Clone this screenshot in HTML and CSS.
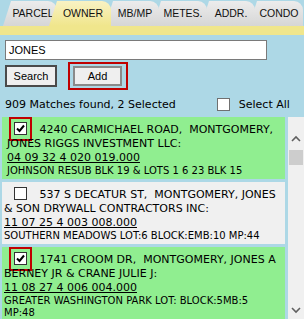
FILE: index.html
```html
<!DOCTYPE html>
<html lang="en">
  <head>
    <meta charset="UTF-8" />
    <title>Owner Search</title>
    <link rel="stylesheet" href="styles.css">
  </head>
  <body>
    <div class="tabs">
      <div class="tab">PARCEL</div>
      <div class="tab active">OWNER</div>
      <div class="tab">MB/MP</div>
      <div class="tab">METES.</div>
      <div class="tab">ADDR.</div>
      <div class="tab">CONDO</div>
    </div>
    <div class="tab-strip"></div>

    <div class="search-panel">
      <div class="search-input">JONES</div>
      <div class="search-buttons">
        <button class="btn btn-search">Search</button>
        <span class="btn-frame"><button class="btn btn-add">Add</button></span>
      </div>
      <div class="summary">
        <span>909 Matches found, 2 Selected</span>
        <label class="select-all"><span class="check"></span>Select All</label>
      </div>
    </div>

    <div class="results">
      <div class="results-list">
        <div class="result selected first">
          <span class="check-frame"><span class="check checked"></span></span>
          4240 CARMICHAEL ROAD,&nbsp; MONTGOMERY, JONES RIGGS INVESTMENT LLC:<br>
          <a href="#">04 09 32 4 020 019.000</a>
          <div class="legal">JOHNSON RESUB BLK 19 &amp; LOTS 1 6 23 BLK 15</div>
        </div>
        <div class="result">
          <span class="check-frame"><span class="check"></span></span>
          537 S DECATUR ST,&nbsp; MONTGOMERY, JONES &amp; SON DRYWALL CONTRACTORS INC:<br>
          <a href="#">11 07 25 4 003 008.000</a>
          <div class="legal">SOUTHERN MEADOWS LOT:6 BLOCK:EMB:10 MP:44</div>
        </div>
        <div class="result selected">
          <span class="check-frame"><span class="check checked"></span></span>
          1741 CROOM DR,&nbsp; MONTGOMERY, JONES A BERNEY JR &amp; CRANE JULIE J:<br>
          <a href="#">11 08 27 4 006 004.000</a>
          <div class="legal">GREATER WASHINGTON PARK LOT: BLOCK:5MB:5 MP:48</div>
        </div>
      </div>
      <div class="scrollbar">
        <svg class="arrow-up" width="10" height="7" viewBox="0 0 10 7"><path d="M1 6 L5 2 L9 6" fill="none" stroke="#606060" stroke-width="1.6"/></svg>
        <div class="thumb"></div>
        <svg class="arrow-down" width="10" height="7" viewBox="0 0 10 7"><path d="M1 1 L5 5 L9 1" fill="none" stroke="#606060" stroke-width="1.6"/></svg>
      </div>
    </div>
  </body>
</html>
```

FILE: styles.css
```css
body {
  margin: 0;
  width: 304px;
  height: 319px;
  overflow: hidden;
  background-color: #add8e6;
  font-family: "DejaVu Sans", Verdana, sans-serif;
  font-size: 11px;
  color: #000;
}

/* tabs */
.tabs {
  display: flex;
  height: 25px;
  padding: 1px 0 0 3px;
}

.tab {
  position: relative;
  width: 54px;
  margin-right: -6px;
  padding-left: 6px;
  box-sizing: border-box;
  text-align: center;
  line-height: 25px;
  font-family: "Liberation Sans", Arial, sans-serif;
  font-size: 10.5px;
  color: #111;
  background: linear-gradient(#ececec, #d6d6d6);
  border-radius: 0 9px 0 0;
  clip-path: polygon(0 100%, 8px 0, 100% 0, 100% 100%);
}

.tab.active {
  z-index: 1;
  width: 62px;
  margin-left: -2px;
  background: linear-gradient(#f9f2c4, #f0e68c);
}

.tab-strip {
  height: 9px;
  background-color: #f0e68c;
}

/* search */
.search-panel {
  padding: 5px 0 0 5px;
}

.search-input {
  width: 262px;
  height: 20px;
  box-sizing: border-box;
  padding-left: 3px;
  border: 1px solid #7a7a7a;
  background: #fff;
  font-family: "Liberation Sans", Arial, sans-serif;
  font-size: 11px;
  line-height: 18px;
}

.search-buttons {
  display: flex;
  align-items: center;
  gap: 11px;
  margin-top: 2px;
  height: 28px;
}

.btn {
  height: 22px;
  padding: 0;
  background: #efefef;
  font-family: "Liberation Sans", Arial, sans-serif;
  font-size: 11px;
  color: #000;
}

.btn-search {
  width: 52px;
  border: 2px solid #4a4a4a;
}

.btn-frame {
  display: flex;
  padding: 2px 4px 2px 3px;
  border: 2px solid #c00000;
}

.btn-add {
  width: 49px;
  height: 20px;
  border: 2px solid #8a8a8a;
}

.summary {
  display: flex;
  align-items: center;
  height: 16px;
  margin-top: 6px;
}

.select-all {
  display: flex;
  align-items: center;
  margin-left: 41px;
}

.select-all .check {
  margin-right: 9px;
  border-color: #707070;
}

/* checkboxes */
.check {
  display: inline-block;
  width: 13px;
  height: 13px;
  box-sizing: border-box;
  border: 1px solid #333;
  background: #fff;
  vertical-align: top;
}

.check.checked {
  background: #fff url("data:image/svg+xml;utf8,<svg xmlns='http://www.w3.org/2000/svg' width='11' height='11'><path d='M2 5.5 L4.5 8 L9 2.5' fill='none' stroke='black' stroke-width='2'/></svg>") no-repeat center;
}

.check-frame {
  display: inline-block;
  padding: 3px;
  border: 2px solid transparent;
  margin: -7px 4px -5px 5px;
  vertical-align: middle;
}

.selected .check-frame {
  border-color: #c00000;
}

/* results */
.results {
  display: flex;
  height: 202px;
  margin-top: 5px;
  overflow: hidden;
}

.results-list {
  flex: 1;
}

.result {
  margin: 0 3px 3px 2px;
  padding: 6px 4px 2px 2px;
  line-height: 14px;
  background-color: #f0f0f0;
}

.result.selected {
  background-color: #90ee90;
}

.result.first {
  padding-left: 5px;
}

.result.first .check-frame {
  margin-left: 2px;
}

.result a {
  color: #000;
}

.legal {
  font-size: 10px;
  line-height: 12px;
}

.scrollbar {
  display: flex;
  flex-direction: column;
  align-items: center;
  width: 16px;
  background-color: #f0f0f0;
}

.arrow-up {
  margin-top: 18px;
}

.thumb {
  width: 14px;
  height: 15px;
  margin-top: 8px;
  background-color: #cdcdcd;
}

.arrow-down {
  margin-top: auto;
  margin-bottom: 5px;
}
```
